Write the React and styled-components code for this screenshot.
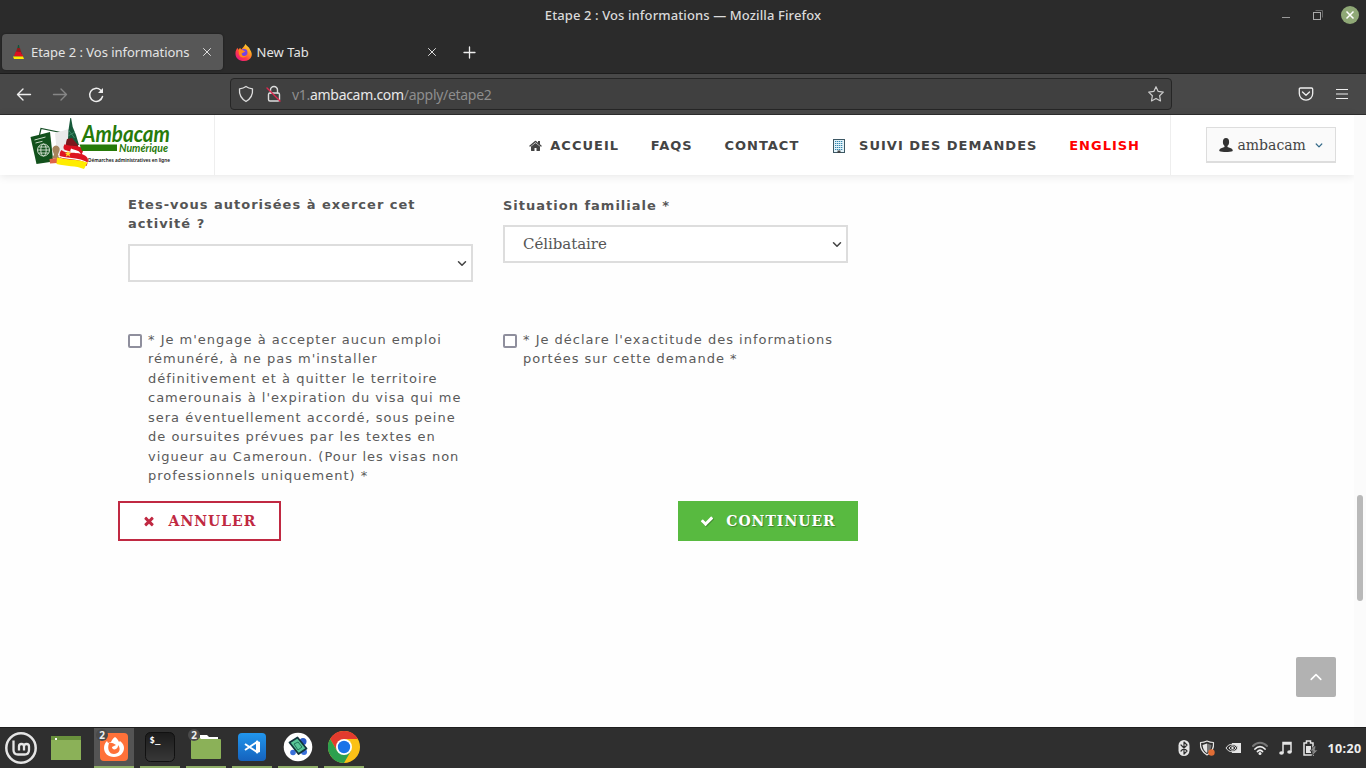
import React from "react";
import styled, { createGlobalStyle } from "styled-components";

const Global = createGlobalStyle`
  * { box-sizing: border-box; }
  body { margin: 0; background: #fff; overflow: hidden; }
  button { margin: 0; padding: 0; border: 0; background: none; color: inherit; font: inherit; }
`;
const ui = `"Noto Sans", "Open Sans", sans-serif`;
const sans = `"DejaVu Sans", sans-serif`;
const serif = `"DejaVu Serif", serif`;

const Desktop = styled.div`
  width: 1366px; height: 768px; display: flex; flex-direction: column; overflow: hidden;
`;
const TitleBar = styled.header`
  height: 31px; flex: none; background: #2b2b2b; display: grid;
  grid-template-columns: 1fr auto 1fr; align-items: start;
`;
const WindowTitle = styled.h1`
  grid-column: 2; margin: 0; font: 500 13px/31px ${ui}; letter-spacing: 0.11px; color: #dadada; white-space: nowrap;
`;
const WindowButtons = styled.div`
  display: flex; justify-content: flex-end; padding-right: 7px; height: 30px; align-items: center;
`;
const TabStrip = styled.nav`
  height: 43px; flex: none; background: #2b2b2b; border-bottom: 1px solid #1d1d1d;
  display: flex; align-items: flex-start; padding: 3px 0 0 2px;
`;
const Tab = styled.div`
  height: 36px; width: ${p => p.$w}px; display: flex; align-items: center; gap: ${p => p.$gap}px; border-radius: 4px;
  padding: 0 9px 0 ${p => p.$pad}px; background: ${p => (p.$active ? "#575757" : "transparent")};
  box-shadow: ${p => (p.$active ? "0 0 2px #181818" : "none")};
`;
const TabLabel = styled.span`
  font: 13px/36px ${ui}; letter-spacing: ${p => p.$ls || 0}px; color: #e4e4e4; flex: 1; white-space: nowrap;
`;
const Toolbar = styled.div`
  height: 41px; flex: none; background: #484848; border-bottom: 1px solid #2d2d2d;
  display: flex; align-items: center; padding: 0 15px;
`;
const NavButtons = styled.div`display: flex; gap: 18px; width: 215px;`;
const UrlBar = styled.div`
  width: 942px; height: 32px; border: 1px solid #262626; border-radius: 4px; background: #404040;
  display: flex; align-items: center; padding: 0 6px;
`;
const Url = styled.span`
  flex: 1; margin-left: 9px; padding-top: 1px; font: 14px/30px ${ui}; letter-spacing: -0.3px; color: #8e8e8e; white-space: nowrap;
  b { font-weight: 400; color: #e8e8e8; }
`;
const ToolbarEnd = styled.div`display: flex; gap: 18px; margin-left: auto;`;

const Page = styled.main`
  flex: 1; min-height: 0; position: relative; display: flex; background: #fefefe;
`;
const PageBody = styled.div`width: 1354px;`;
const ScrollTrack = styled.div`flex: 1; background: #fbfbfb; padding: 380px 3px 0 3px;`;
const ScrollThumb = styled.div`height: 106px; border-radius: 3px; background: #b9b9b9;`;
const SiteHeader = styled.header`
  height: 60px; background: #fff; display: flex; box-shadow: 0 1px 9px rgba(0,0,0,.1);
`;
const LogoBox = styled.div`width: 215px; border-right: 1px solid #eee;`;
const Menu = styled.nav`
  width: 956px; border-right: 1px solid #eee; display: flex; justify-content: flex-end; align-items: center;
  padding: 2px 30px 0 0; gap: 31.8px;
`;
const MenuItem = styled.a`
  display: flex; align-items: center; gap: ${p => p.$gap || 0}px; white-space: nowrap;
  font: bold 13px/20px ${sans}; letter-spacing: 1px; color: ${p => p.$color || "#444"};
  svg { margin-top: -1px; }
`;
const Account = styled.div`width: 183px; padding: 12px 0 0 35px;`;
const UserButton = styled.button`
  width: 130px; height: 36px; display: flex; align-items: center; padding: 0 12px;
  border: 1px solid #ddd; border-bottom-width: 2px; background: #fafafa;
  span { font: 14px/34px ${serif}; padding-top: 1px; color: #444; flex: 1; text-align: left; margin-left: 4.5px; }
`;
const Form = styled.form`padding: 20px 0 0 118px; width: 858px;`;
const Row = styled.div`
  display: grid; grid-template-columns: 345px 345px; gap: 30px; padding-left: 10px; height: ${p => p.$h}px;
`;
const Label = styled.label`
  display: block; padding-top: ${p => p.$drop || 0}px; margin-top: -0.3px; margin-bottom: ${p => 10.3 - (p.$drop || 0)}px;
  color: #555; font: bold 13px/19.5px ${sans}; letter-spacing: 1px;
`;
const Select = styled.div`
  height: 38px; border: 2px solid #ddd; background: #fff; display: flex; align-items: center;
  justify-content: space-between; padding: 0 4px 0 18px; font: 15px/34px ${serif}; letter-spacing: -0.05px; color: #555;
`;
const Consent = styled.label`
  display: flex; gap: 6px; align-items: flex-start; font: 13px/19.5px ${sans}; letter-spacing: 1px; color: #5a5a5a;
  span { white-space: nowrap; margin-top: -0.3px; }
`;
const Check = styled.i`
  width: 14px; height: 14px; flex: none; margin-top: 4px; border: 2px solid #8f8f9d; border-radius: 2px; background: #fff;
`;
const Actions = styled.div`display: flex; justify-content: space-between; width: 740px;`;
const Action = styled.button`
  height: 40px; width: ${p => (p.$primary ? 180 : 163)}px; display: flex; align-items: center; justify-content: center;
  gap: 12px; font: bold 14px/36px ${serif}; letter-spacing: 1px;
  border: 2px solid ${p => (p.$primary ? "#58ba40" : "#c02942")};
  background: ${p => (p.$primary ? "#58ba40" : "#fff")};
  color: ${p => (p.$primary ? "#fff" : "#c02942")};
  text-shadow: ${p => (p.$primary ? "1px 1px 1px rgba(0,0,0,.3)" : "none")};
`;
const ToTop = styled.button`
  position: absolute; left: 1296px; top: 542px; width: 40px; height: 40px; border-radius: 2px; background: #b2b2b2;
  display: grid; place-items: center; padding-bottom: 1px;
`;
const Taskbar = styled.footer`
  height: 41px; flex: none; border-top: 1px solid #1e1e1e; background: #2f2f2f; display: flex; padding: 0 4.5px 0 5px;
`;
const Launchers = styled.div`display: flex; align-items: center; gap: 14px; width: 89px;`;
const Tasks = styled.div`display: flex; gap: 6px;`;
const Task = styled.div`
  position: relative; width: 40px; height: 40px; display: grid; place-items: center; padding-bottom: 1px;
  background: ${p => (p.$active ? "#545454" : "transparent")}; border-bottom: 2px solid #8fae68;
`;
const Count = styled.span`
  position: absolute; left: 2px; top: 1px; width: 12px; height: 12px; border-radius: 6px; background: #4a4a4a;
  font: bold 10px/12px ${ui}; color: #eee; text-align: center;
`;
const Tray = styled.div`display: flex; align-items: center; margin-left: auto; gap: 8.9px;`;
const Clock = styled.time`font: bold 12.5px/40px ${ui}; padding-top: 1px; color: #eee; letter-spacing: 0.4px;`;

const Svg = ({ w = 16, h = w, box, children, ...rest }) => (
  <svg width={w} height={h} viewBox={box || `0 0 ${w} ${h}`} fill="none" display="block" flex="none" {...rest}>{children}</svg>
);
const Line = ({ d, c = "#eee", s = 1.2, ...r }) => <path d={d} stroke={c} strokeWidth={s} strokeLinecap="round" strokeLinejoin="round" {...r} />;

const Close = () => <Svg w={14}><Line d="M3.500 3.500l7 7M10.500 3.500l-7 7" s={1} c="#ddd" /></Svg>;
const Tower = () => (
  <Svg w={15} h={16}>
    <path d="M7 1h1l.7 4H6.300z" fill="#125437" /><path d="M6.300 4h2.600l2 6-7 1z" fill="#901b1b" />
    <path d="M5 7.500l5 .8v1.500l2 1.500v1.500L3 12l1-2.500z" fill="#dc1020" /><path d="M2 12.500l10 0 1 2.500-10 0z" fill="#ffec00" />
  </Svg>
);
const Firefox = () => (
  <Svg w={17} box="0 0 18 18">
    <defs>
      <linearGradient id="fx" x1="1" y1="0" x2=".2" y2="1"><stop offset="0" stopColor="#fff34b" /><stop offset=".4" stopColor="#ff9a1f" /><stop offset=".7" stopColor="#ff3b47" /><stop offset="1" stopColor="#e31587" /></linearGradient>
    </defs>
    <path d="M11 0c1 2 4 3 5 6 2 3 2 5 1.500 7-1 3-4 5-8 5-5 0-9-3-9-8 0-3 1-4 2-6l1 2 2-2 1 2c1-2 3.500-3 4.500-6z" fill="url(#fx)" />
    <circle cx="9.500" cy="9" r="3.700" fill="#7542e5" /><path d="M4 6c2-1 3 0 5 1l2 1-2 1-2 1c0 3 4 4 6 1-1 4-8 5-9-1z" fill="#ff8a19" />
  </Svg>
);

const checkPath = "M1671 566q0 40-28 68l-724 724-136 136q-28 28-68 28t-68-28l-136-136-362-362q-28-28-28-68t28-68l136-136q28-28 68-28t68 28l294 295 656-657q28-28 68-28t68 28l136 136q28 28 28 68z";
const HomeIcon = () => (
  <Svg w={13} box="64 160 1664 1376"><path fill="#444" d="M1472 992v480q0 26-19 45t-45 19h-384v-384h-256v384h-384q-26 0-45-19t-19-45v-480q0-1 .5-3t.5-3l575-474 575 474q1 2 1 6zm223-69l-62 74q-8 9-21 11h-3q-13 0-21-7l-692-577-692 577q-12 8-24 7-13-2-21-11l-62-74q-8-10-7-23.5t11-21.5l719-599q32-26 76-26t76 26l244 204v-195q0-14 9-23t23-9h192q14 0 23 9t9 23v408l219 182q10 8 11 21.5t-7 23.5z" /></Svg>
);
const BuildingIcon = () => (
  <Svg w={14} box="-2 0 14 14">
    <rect x=".5" y=".5" width="11" height="13" fill="#e3f3fa" stroke="#3d5864" />
    {[2, 4, 6, 8, 10].map(y => <path key={y} d={`M2 ${y + 0.5}h8`} stroke="#3486ac" strokeDasharray="1.300 .7" />)}
    <path d="M4.500 11.500h3V14h-3z" fill="#444" />
  </Svg>
);
const TimesIcon = () => (
  <Svg w={14} box="128 0 1792 1792"><path fill="#c02942" d="M1490 1322q0 40-28 68l-136 136q-28 28-68 28t-68-28l-294-294-294 294q-28 28-68 28t-68-28l-136-136q-28-28-28-68t28-68l294-294-294-294q-28-28-28-68t28-68l136-136q28-28 68-28t68 28l294 294 294-294q28-28 68-28t68 28l136 136q28 28 28 68t-28 68l-294 294 294 294q28 28 28 68z" /></Svg>
);
const CheckIcon = () => (
  <Svg w={14} box="0 0 1792 1792" overflow="visible"><path fill="rgba(0,0,0,.25)" transform="translate(110 110)" d={checkPath} /><path fill="#fff" d={checkPath} /></Svg>
);
const Chevron = ({ c = "#444", w = 10, s = 1.5, up }) => <Svg w={w} box="0 0 10 10"><Line d={up ? "M1 7l4-4 4 4" : "M1.500 3.700L5 7.300l3.500-3.600"} c={c} s={s} /></Svg>;

const Logo = () => (
  <Svg w={214} h={60}>
    <path d="M39.500 20l1.500-6.500L68 19" stroke="#174f27" strokeWidth="1.200" />
    <path d="M55 18l14-4 3 20-15 5z" fill="#e9e9e9" />
    <path d="M30.500 22L50 17l3.300 29.500L36.500 49z" fill="#12511c" />
    <path d="M34.500 25l11-3M35.500 28l7-1.700" stroke="#c8d8c5" />
    <g stroke="#dbe7d9" strokeWidth=".9"><circle cx="43.500" cy="35" r="6" /><ellipse cx="43.500" cy="35" rx="2.700" ry="6" /><path d="M37.500 35h12M38.500 32h10M38.500 38h10" /></g>
    <path d="M52.500 35.500a3.700 3.700 0 1 1 7 0l-1.500 4 2 4h-8l2-4z" fill="#a6845c" /><path d="M49.500 44l7.500-1v5l-7 .5z" fill="#df6448" />
    <path d="M70.300 3h.8l1.600 9 3.300 8 3 10-5 1-6-7 .5-9z" fill="#17593a" /><path d="M68.500 15l6 8M68 21l7-4" stroke="#4a9a78" strokeWidth=".7" />
    <path d="M67 24l5-1 6 7v4l-11-1c-2-3-1-6 0-9z" fill="#7d161c" />
    <path d="M65 29c1 2.500 17 1 18 5 .6 3-2 6-2 6l-16-5c-2-1-2-4 0-6z" fill="#d9101f" />
    <path d="M71 33.500c5 2 9 2 10 6-3-2-8-1-11-3z" fill="#fff" />
    <path d="M61.500 35c5 5 22 .500 26 8 1.500 3-1 8-1 8L60 43c-1-3-.5-6 1.500-8z" fill="#dd1420" />
    <path d="M68 35.500l.9 2.300h2.400l-1.900 1.500.8 2.400-2.200-1.400-2.200 1.400.8-2.400-1.900-1.500h2.400z" fill="#ffe028" />
    <path d="M58.500 41c6 3.500 20 1 29 7" stroke="#fff" strokeWidth="1.200" />
    <path d="M57 42.500c9 2.500 20 1.500 30.500 5L84 54c-8-3.500-18-2.500-27.500-5z" fill="#ffec00" />
    <path d="M79.500 29.500H117V36H82z" fill="#267a09" />
    <text x="82" y="27" textLength="88" lengthAdjust="spacingAndGlyphs" fill="#267a09" fontFamily="Lato" fontWeight="700" fontStyle="italic" fontSize="22">Ambacam</text>
    <text x="119" y="37" textLength="49" lengthAdjust="spacingAndGlyphs" fill="#267a09" fontFamily="Lato" fontWeight="700" fontStyle="italic" fontSize="10.500">Numérique</text>
    <text x="88" y="46.500" textLength="82" lengthAdjust="spacingAndGlyphs" fill="#111" fontFamily="Noto Sans" fontWeight="600" fontSize="5.500">Démarches administratives en ligne</text>
  </Svg>
);

const MintIcon = () => <Svg w={32}><circle cx="16" cy="16" r="14.700" stroke="#e5e5e5" strokeWidth="2.500" /><path d="M8.500 8.500v9.500c0 3 1.500 4.500 4.500 4.500h6.500c3 0 4.500-1.500 4.500-4.500v-3.500a2.500 2.500 0 0 0-5 0v4m0-4a2.500 2.500 0 0 0-5 0v4" stroke="#e5e5e5" strokeWidth="2.300" /></Svg>;
const DesktopIcon = () => <Svg w={30} h={24}><path d="M0 0h30v24H0z" fill="#8bb158" /><path d="M0 0h30v4H0z" fill="#69913c" /><path d="M4 2h2v2H4z" fill="#fff" /></Svg>;
const FirefoxApp = () => <Svg w={28}><rect width="28" height="28" rx="4" fill="#ff7139" /><path d="M15 4c2 1 3 3 4 5l1-1c3 2 4 5 4 7 0 5-4 9-10 9S4 20 4 15c0-3 1-5 3-7l1 2 3-1c1-2 2-4 4-5z" fill="#fff" /><path d="M9 10c3-1 5 1 7 2l-4 2c0 2 2 3 4 2s2-3 2-4c4 5 0 9-4 9-5 0-7-5-5-11z" fill="#ff7139" /></Svg>;
const Terminal = () => <Svg w={30}><defs><linearGradient id="term" x2="0" y2="1"><stop stopColor="#1b1b1b" /><stop offset="1" stopColor="#383838" /></linearGradient></defs><rect x=".5" y=".5" width="29" height="29" rx="5" fill="url(#term)" stroke="#111" /><text x="4.500" y="10.500" fill="#fff" fontFamily="DejaVu Sans Mono" fontWeight="700" fontSize="9">$_</text></Svg>;
const Folder = () => <Svg w={30} h={26}><path d="M9 1h7l2 2h9v6H9z" fill="#fff" /><path d="M0 4q0-1 1-1h7l2 2h19q1 0 1 1v18q0 1-1 1H1q-1 0-1-1z" fill="#8bb158" /></Svg>;
const Code = () => <Svg w={28}><defs><linearGradient id="code" x2="0" y2="1"><stop stopColor="#2196ed" /><stop offset="1" stopColor="#1562bd" /></linearGradient></defs><rect width="28" height="28" rx="4" fill="url(#code)" /><path d="M7 11l12 8V9L7 17" stroke="#fff" strokeWidth="2" /><path d="M18 7.500l4 1.500v10l-4 1.500z" fill="#fff" /></Svg>;
const Notes = () => <Svg w={30}><circle cx="15" cy="15" r="14.300" fill="#fff" /><circle cx="20" cy="9.500" r="3.500" fill="#2859c5" /><circle cx="10" cy="20.500" r="2.800" fill="#3970da" /><circle cx="21" cy="20" r="3" fill="#3970da" /><path d="M6.500 10.500l8-5 9 11-8 5.500z" fill="#58c596" stroke="#12343c" strokeWidth="1.800" strokeLinejoin="round" /><path d="M11 12l4-2 4 5-4 3z" stroke="#23755c" /></Svg>;
const Chrome = () => <Svg w={32}><circle cx="16" cy="16" r="16" fill="#fbc116" /><path d="M2.140 8a16 16 0 0 1 27.720 0H16l-6.900 12z" fill="#e33b2e" /><path d="M2.140 8L9.100 20 16 24l6.900-4L16 32A16 16 0 0 1 2.140 8z" fill="#2da04e" /><circle cx="16" cy="16" r="8" fill="#fff" /><circle cx="16" cy="16" r="6.200" fill="#1a73e8" /></Svg>;

const tasks = [
  { icon: <FirefoxApp />, count: 2, active: true }, { icon: <Terminal /> }, { icon: <Folder />, count: 2 },
  { icon: <Code /> }, { icon: <Notes /> }, { icon: <Chrome /> },
];

const UrlIcons = styled.div`display: flex; gap: 10px;`;

export default function App() {
  return (
    <Desktop>
      <Global />
      <TitleBar>
        <WindowTitle>Etape 2 : Vos informations — Mozilla Firefox</WindowTitle>
        <WindowButtons>
          <Svg w={77} h={18}>
            <path d="M0 11.500h8" stroke="#999" />
            <path d="M33.500 4.500h7v7" stroke="#666" /><rect x="31.500" y="6.500" width="7" height="7" stroke="#aaa" />
            <circle cx="68" cy="9" r="9" fill="#8fa876" /><path d="M64.500 5.500l7 7M71.500 5.500l-7 7" stroke="#fff" strokeWidth="1.500" />
          </Svg>
        </WindowButtons>
      </TitleBar>
      <TabStrip>
        <Tab $w={221} $pad={9} $gap={5} $active><Tower /><TabLabel $ls={-0.03}>Etape 2 : Vos informations</TabLabel><Close /></Tab>
        <Tab $w={225} $pad={12} $gap={4.5}><Firefox /><TabLabel $ls={0.05}>New Tab</TabLabel><Close /></Tab>
        <Svg w={42} h={36}><Line d="M16 18.500h11M21.500 13v11" s={1.300} /></Svg>
      </TabStrip>
      <Toolbar>
        <NavButtons>
          <Svg w={18}><Line d="M2.500 9.500h13M8 4L2.500 9.500 8 15" s={1.400} /></Svg>
          <Svg w={18}><Line d="M2.500 9.500h13M10 4l5.500 5.500L10 15" c="#868686" s={1.400} /></Svg>
          <Svg w={18}><Line d="M15.500 11.500A6.500 6.500 0 1 1 13.500 5l1.300 1.200" s={1.500} /><path d="M16 3v5h-5z" fill="#eee" /></Svg>
        </NavButtons>
        <UrlBar>
          <UrlIcons>
            <Svg w={18}><Line d="M9 1.500c2 1.500 4 2 6.500 2.300.5 5.500-1 9.500-6.500 12.700C3.500 13.300 2 9.300 2.500 3.800 5 3.500 7 3 9 1.500z" c="#ddd" s={1.300} /></Svg>
            <Svg w={18}><rect x="3.500" y="8" width="11" height="8" rx="1.500" stroke="#ddd" strokeWidth="1.400" /><Line d="M5.500 8V5a3.500 3.500 0 0 1 7 0v3" c="#ddd" s={1.400} /><Line d="M2 3l13 13" c="#e22850" s={1.400} /></Svg>
          </UrlIcons>
          <Url>v1.<b>ambacam.com</b>/apply/etape2</Url>
          <Svg w={18}><Line d="M9 1.700l2.200 4.700 5.100.7-3.700 3.600.9 5.200L9 13.400 4.500 15.900l.9-5.200-3.700-3.600 5.100-.7z" c="#ccc" /></Svg>
        </UrlBar>
        <ToolbarEnd>
          <Svg w={18}><Line d="M3.500 3h11q1.200 0 1.200 1.200V8.500a6.700 6.700 0 0 1-13.400 0V4.200Q2.300 3 3.500 3zM5.500 7L9 10.300 12.500 7" s={1.300} /></Svg>
          <Svg w={18}><path d="M3 4.500h12M3 9h12M3 13.500h12" stroke="#eee" strokeWidth="1.200" /></Svg>
        </ToolbarEnd>
      </Toolbar>
      <Page>
        <PageBody>
          <SiteHeader>
            <LogoBox><Logo /></LogoBox>
            <Menu>
              <MenuItem $gap={8}><HomeIcon />ACCUEIL</MenuItem>
              <MenuItem>FAQS</MenuItem>
              <MenuItem>CONTACT</MenuItem>
              <MenuItem $gap={14}><BuildingIcon />SUIVI DES DEMANDES</MenuItem>
              <MenuItem $color="#f00">ENGLISH</MenuItem>
            </Menu>
            <Account>
              <UserButton>
                <Svg w={14}><ellipse cx="7" cy="4" rx="3.100" ry="4" fill="#333" /><path d="M5.500 6h3v3l4 1.500q1.300.5 1.300 2.500c-3 1.300-10.600 1.300-13.600 0q0-2 1.300-2.500l4-1.500z" fill="#333" /></Svg>
                <span>ambacam</span>
                <Chevron w={8} c="#356b89" />
              </UserButton>
            </Account>
          </SiteHeader>
          <Form>
            <Row $h={135}>
              <div><Label>Etes-vous autorisées à exercer cet<br />activité ?</Label><Select><span /><Chevron /></Select></div>
              <div><Label $drop={1}>Situation familiale *</Label><Select>Célibataire<Chevron /></Select></div>
            </Row>
            <Row $h={171}>
              <Consent><Check /><span>* Je m'engage à accepter aucun emploi<br />rémunéré, à ne pas m'installer<br />définitivement et à quitter le territoire<br />camerounais à l'expiration du visa qui me<br />sera éventuellement accordé, sous peine<br />de oursuites prévues par les textes en<br />vigueur au Cameroun. (Pour les visas non<br />professionnels uniquement) *</span></Consent>
              <Consent><Check /><span>* Je déclare l'exactitude des informations<br />portées sur cette demande *</span></Consent>
            </Row>
            <Actions>
              <Action type="button"><TimesIcon />ANNULER</Action>
              <Action type="button" $primary><CheckIcon />CONTINUER</Action>
            </Actions>
          </Form>
        </PageBody>
        <ScrollTrack><ScrollThumb /></ScrollTrack>
        <ToTop><Chevron up c="#fff" w={12} s={1.300} /></ToTop>
      </Page>
      <Taskbar>
        <Launchers><MintIcon /><DesktopIcon /></Launchers>
        <Tasks>{tasks.map((t, i) => <Task key={i} $active={t.active}>{t.icon}{t.count && <Count>{t.count}</Count>}</Task>)}</Tasks>
        <Tray>
          <Svg w={12} h={16}><rect x=".5" width="11" height="16" rx="5.500" fill="#e5e5e5" /><Line d="M3 5l6 6-3 3V2l3 3-6 6" c="#2f2f2f" /></Svg>
          <Svg w={17} h={16}><Line d="M8 1c2 1 4 1.500 6.500 1.500C15 8 13 12 8 15 3 12 1 8 1.500 2.500 4 2.500 6 2 8 1z" c="#e5e5e5" /><path d="M8 3.500l4.500 1.500C12 9 11 11 8 13z" fill="#777" /><path d="M8 3.500L3.500 5C4 9 5 11 8 13z" fill="#e5e5e5" /><circle cx="12.500" cy="12.500" r="3.200" fill="#e06d35" /></Svg>
          <Svg w={17} h={12}><path d="M7 1h9v10H7z" fill="#e5e5e5" /><path d="M1 6c3-5 9-5 12 0-3 5-9 5-12 0z" fill="#2f2f2f" stroke="#e5e5e5" /><path d="M4 6c2-3 5-3 7 0-2 3-5 3-7 0z" stroke="#e5e5e5" /><circle cx="7.500" cy="6" r="1.200" fill="#e5e5e5" /></Svg>
          <Svg w={18} h={14}><Line d="M2 5c4-4.500 10-4.500 14 0" c="#777" s={2} /><Line d="M4 8c3-3.200 7-3.200 10 0M6.500 10.500c1.500-1.700 3.500-1.700 5 0" s={1.800} /><circle cx="9" cy="12.500" r="1.500" fill="#eee" /></Svg>
          <Svg w={16}><path d="M5 13V2.500h8V12M5 4h8" stroke="#e5e5e5" strokeWidth="1.500" /><ellipse cx="3.500" cy="13" rx="2.300" ry="1.800" fill="#e5e5e5" /><ellipse cx="11.500" cy="12" rx="2.300" ry="1.800" fill="#e5e5e5" /></Svg>
          <Svg w={16} h={16} box="1 0 16 16"><path d="M3 3h2.500V1h4v2H12v12H3z" stroke="#e5e5e5" strokeWidth="1.500" /><path d="M5 6h5v7H5z" fill="#e5e5e5" /><path d="M13 6l-4 5h3l-1 5 6-6h-3l1-4z" fill="#888" stroke="#2f2f2f" strokeWidth=".7" /></Svg>
          <Clock>10:20</Clock>
        </Tray>
      </Taskbar>
    </Desktop>
  );
}
